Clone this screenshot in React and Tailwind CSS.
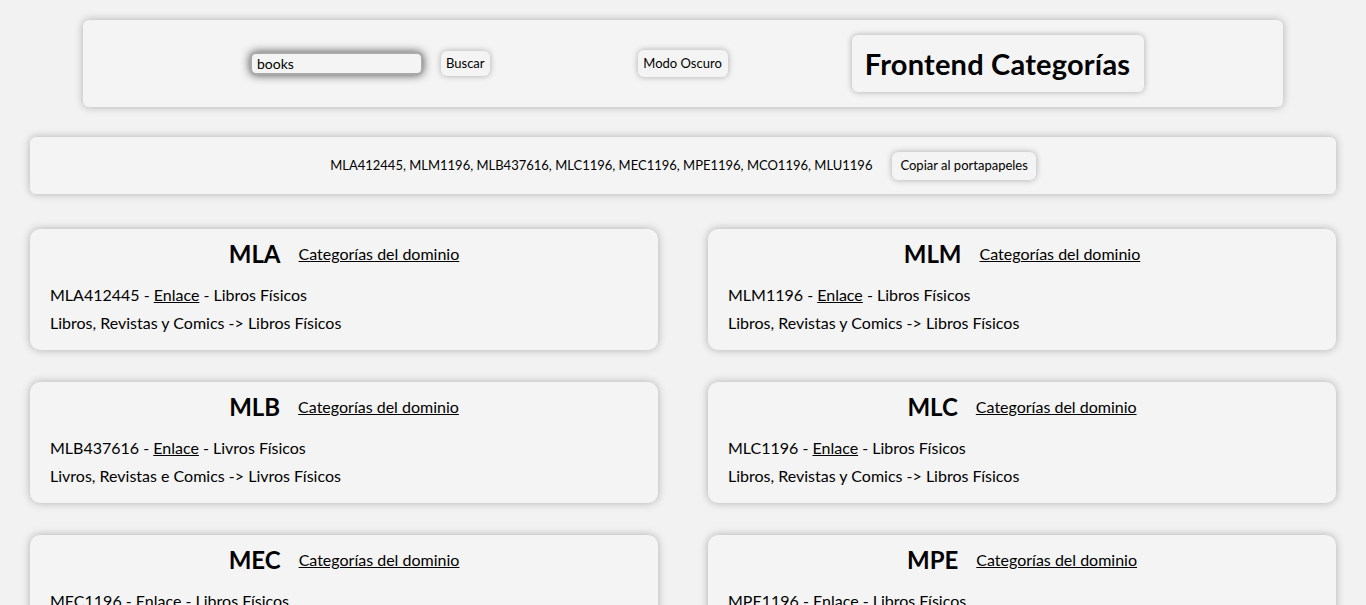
import React from "react"

const sites = [
    { code: "MLA", id: "MLA412445", name: "Libros Físicos", path: "Libros, Revistas y Comics -> Libros Físicos" },
    { code: "MLM", id: "MLM1196", name: "Libros Físicos", path: "Libros, Revistas y Comics -> Libros Físicos" },
    { code: "MLB", id: "MLB437616", name: "Livros Físicos", path: "Livros, Revistas e Comics -> Livros Físicos" },
    { code: "MLC", id: "MLC1196", name: "Libros Físicos", path: "Libros, Revistas y Comics -> Libros Físicos" },
    { code: "MEC", id: "MEC1196", name: "Libros Físicos", path: "Libros, Revistas y Comics -> Libros Físicos" },
    { code: "MPE", id: "MPE1196", name: "Libros Físicos", path: "Libros, Revistas y Comics -> Libros Físicos" },
    { code: "MCO", id: "MCO1196", name: "Libros Físicos", path: "Libros, Revistas y Comics -> Libros Físicos" },
    { code: "MLU", id: "MLU1196", name: "Libros Físicos", path: "Libros, Revistas y Comics -> Libros Físicos" },
]

const btn = "rounded-md bg-[#f4f4f4] shadow-[0_0_6px_rgba(0,0,0,0.3)] text-[13px] text-black"

function SiteCard({ site }) {
    return (
        <div className="rounded-[10px] bg-[#f4f4f4] shadow-[0_0_9px_rgba(0,0,0,0.28)] px-5 pt-[10px] pb-[13px]">
            <div className="flex items-center justify-center gap-[18px]">
                <h2 className="text-[24px] font-bold leading-[30px]">{site.code}</h2>
                <a href="#" className="underline text-[16px]">Categorías del dominio</a>
            </div>
            <p className="mt-[12px] text-[16px] leading-[28px]">
                {site.id} - <a href="#" className="underline">Enlace</a> - {site.name}
            </p>
            <p className="text-[16px] leading-[28px]">{site.path}</p>
        </div>
    )
}

export default function App() {
    return (
        <div className="min-h-screen bg-[#f2f2f2] text-black font-['Lato','Open_Sans',sans-serif] pt-5 pb-10">
            {/* header */}
            <div className="mx-auto w-[1200px] h-[87px] rounded-md bg-[#f4f4f4] shadow-[0_0_9px_rgba(0,0,0,0.28)] flex items-center pl-[167px]">
                <input
                    defaultValue="books"
                    className="w-[173px] h-[23px] rounded-md border-2 border-[#a9a9a9] bg-[#f4f4f4] px-[5px] text-[14px] outline-none shadow-[0_0_10px_rgba(0,0,0,0.7)]"
                />
                <button className={btn + " ml-[18px] h-[25px] px-[5px]"}>Buscar</button>
                <button className={btn + " ml-[148px] w-[90px] h-[27px]"}>Modo Oscuro</button>
                <div className="ml-[124px] h-[57px] w-[292px] rounded-md bg-[#f4f4f4] shadow-[0_0_6px_rgba(0,0,0,0.3)] flex items-center justify-center">
                    <h1 className="text-[29px] font-bold tracking-[0.2px]">Frontend Categorías</h1>
                </div>
            </div>

            {/* ids bar */}
            <div className="mx-[30px] mt-[30px] h-[57px] rounded-md bg-[#f4f4f4] shadow-[0_0_9px_rgba(0,0,0,0.28)] flex items-center justify-center gap-5">
                <span className="text-[13px]">{sites.map((s) => s.id).join(", ")}</span>
                <button className={btn + " h-[28px] px-[8px]"}>Copiar al portapapeles</button>
            </div>

            {/* cards */}
            <div className="mx-[30px] mt-[35px] grid grid-cols-2 gap-x-[50px] gap-y-[32px]">
                {sites.map((s) => (
                    <SiteCard key={s.code} site={s} />
                ))}
            </div>
        </div>
    )
}
